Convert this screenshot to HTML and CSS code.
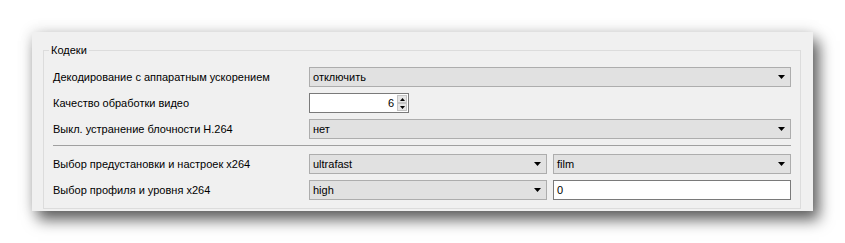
FILE: index.html
```html
<!DOCTYPE html>
<html lang="ru">
<head>
    <meta charset="UTF-8">
    <title>Кодеки</title>
    <link rel="stylesheet" href="styles.css">
</head>
<body>
    <div class="window">
        <fieldset class="group">
            <legend>Кодеки</legend>
            <div class="grid">
                <div class="label">Декодирование с аппаратным ускорением</div>
                <div class="combo wide">
                    <span>отключить</span>
                    <svg class="arrow" width="7" height="4" viewBox="0 0 7 4"><polygon points="0,0 7,0 3.5,4"/></svg>
                </div>

                <div class="label">Качество обработки видео</div>
                <div class="spin">
                    <span class="spin-value">6</span>
                    <div class="spin-btns">
                        <div class="spin-btn"><svg width="5" height="3" viewBox="0 0 5 3"><polygon points="2.5,0 5,3 0,3"/></svg></div>
                        <div class="spin-btn"><svg width="5" height="3" viewBox="0 0 5 3"><polygon points="0,0 5,0 2.5,3"/></svg></div>
                    </div>
                </div>
                <div></div>

                <div class="label">Выкл. устранение блочности H.264</div>
                <div class="combo wide">
                    <span>нет</span>
                    <svg class="arrow" width="7" height="4" viewBox="0 0 7 4"><polygon points="0,0 7,0 3.5,4"/></svg>
                </div>

                <div class="sep"></div>

                <div class="label">Выбор предустановки и настроек x264</div>
                <div class="combo">
                    <span>ultrafast</span>
                    <svg class="arrow" width="7" height="4" viewBox="0 0 7 4"><polygon points="0,0 7,0 3.5,4"/></svg>
                </div>
                <div class="combo">
                    <span>film</span>
                    <svg class="arrow" width="7" height="4" viewBox="0 0 7 4"><polygon points="0,0 7,0 3.5,4"/></svg>
                </div>

                <div class="label">Выбор профиля и уровня x264</div>
                <div class="combo">
                    <span>high</span>
                    <svg class="arrow" width="7" height="4" viewBox="0 0 7 4"><polygon points="0,0 7,0 3.5,4"/></svg>
                </div>
                <div class="edit">0</div>
            </div>
        </fieldset>
    </div>
</body>
</html>
```

FILE: styles.css
```css
body {
    margin: 0;
    min-height: 243px;
    padding-top: 32px;
    box-sizing: border-box;
    background: #ffffff;
    font-family: "Liberation Sans", Arial, sans-serif;
    font-size: 11px;
    color: #000;
}

.window {
    margin: 0 0 0 32px;
    width: 781px;
    height: 179px;
    box-sizing: border-box;
    padding: 12px 12px 0 11px;
    background: #f0f0f0;
    box-shadow: 6px 9px 14px rgba(0, 0, 0, 0.6), 0 0 14px rgba(0, 0, 0, 0.15);
}

.group {
    margin: 0;
    padding: 10px 8px 8px 9px;
    border: 1px solid #dcdcdc;
}

.group legend {
    margin-left: -4px;
    padding: 0 2px;
    line-height: 13px;
}

.grid {
    display: grid;
    grid-template-columns: 250px 238px 238px;
    column-gap: 6px;
    row-gap: 6px;
}

.label {
    display: flex;
    align-items: center;
    height: 20px;
    white-space: nowrap;
}

.combo {
    display: flex;
    align-items: center;
    justify-content: space-between;
    height: 20px;
    box-sizing: border-box;
    padding: 0 5px 0 3px;
    background: #e1e1e1;
    border: 1px solid #adadad;
}

.wide {
    grid-column: span 2;
}

.arrow {
    display: block;
}

.spin {
    display: flex;
    align-items: center;
    width: 100px;
    height: 20px;
    box-sizing: border-box;
    padding: 1px;
    background: #fff;
    border: 1px solid #7a7a7a;
}

.spin-value {
    flex: 1;
    text-align: right;
    padding-right: 3px;
}

.spin-btns {
    display: flex;
    flex-direction: column;
    width: 10px;
    height: 16px;
}

.spin-btn {
    flex: 1;
    display: flex;
    align-items: center;
    justify-content: center;
    background: #e5e5e5;
    border: 1px solid #c4c4c4;
}

.spin-btn svg {
    display: block;
}

.sep {
    grid-column: span 3;
    height: 1px;
    background: #a0a0a0;
    margin-bottom: 2px;
}

.edit {
    display: flex;
    align-items: center;
    height: 20px;
    box-sizing: border-box;
    padding: 0 3px;
    background: #fff;
    border: 1px solid #7a7a7a;
}
```
